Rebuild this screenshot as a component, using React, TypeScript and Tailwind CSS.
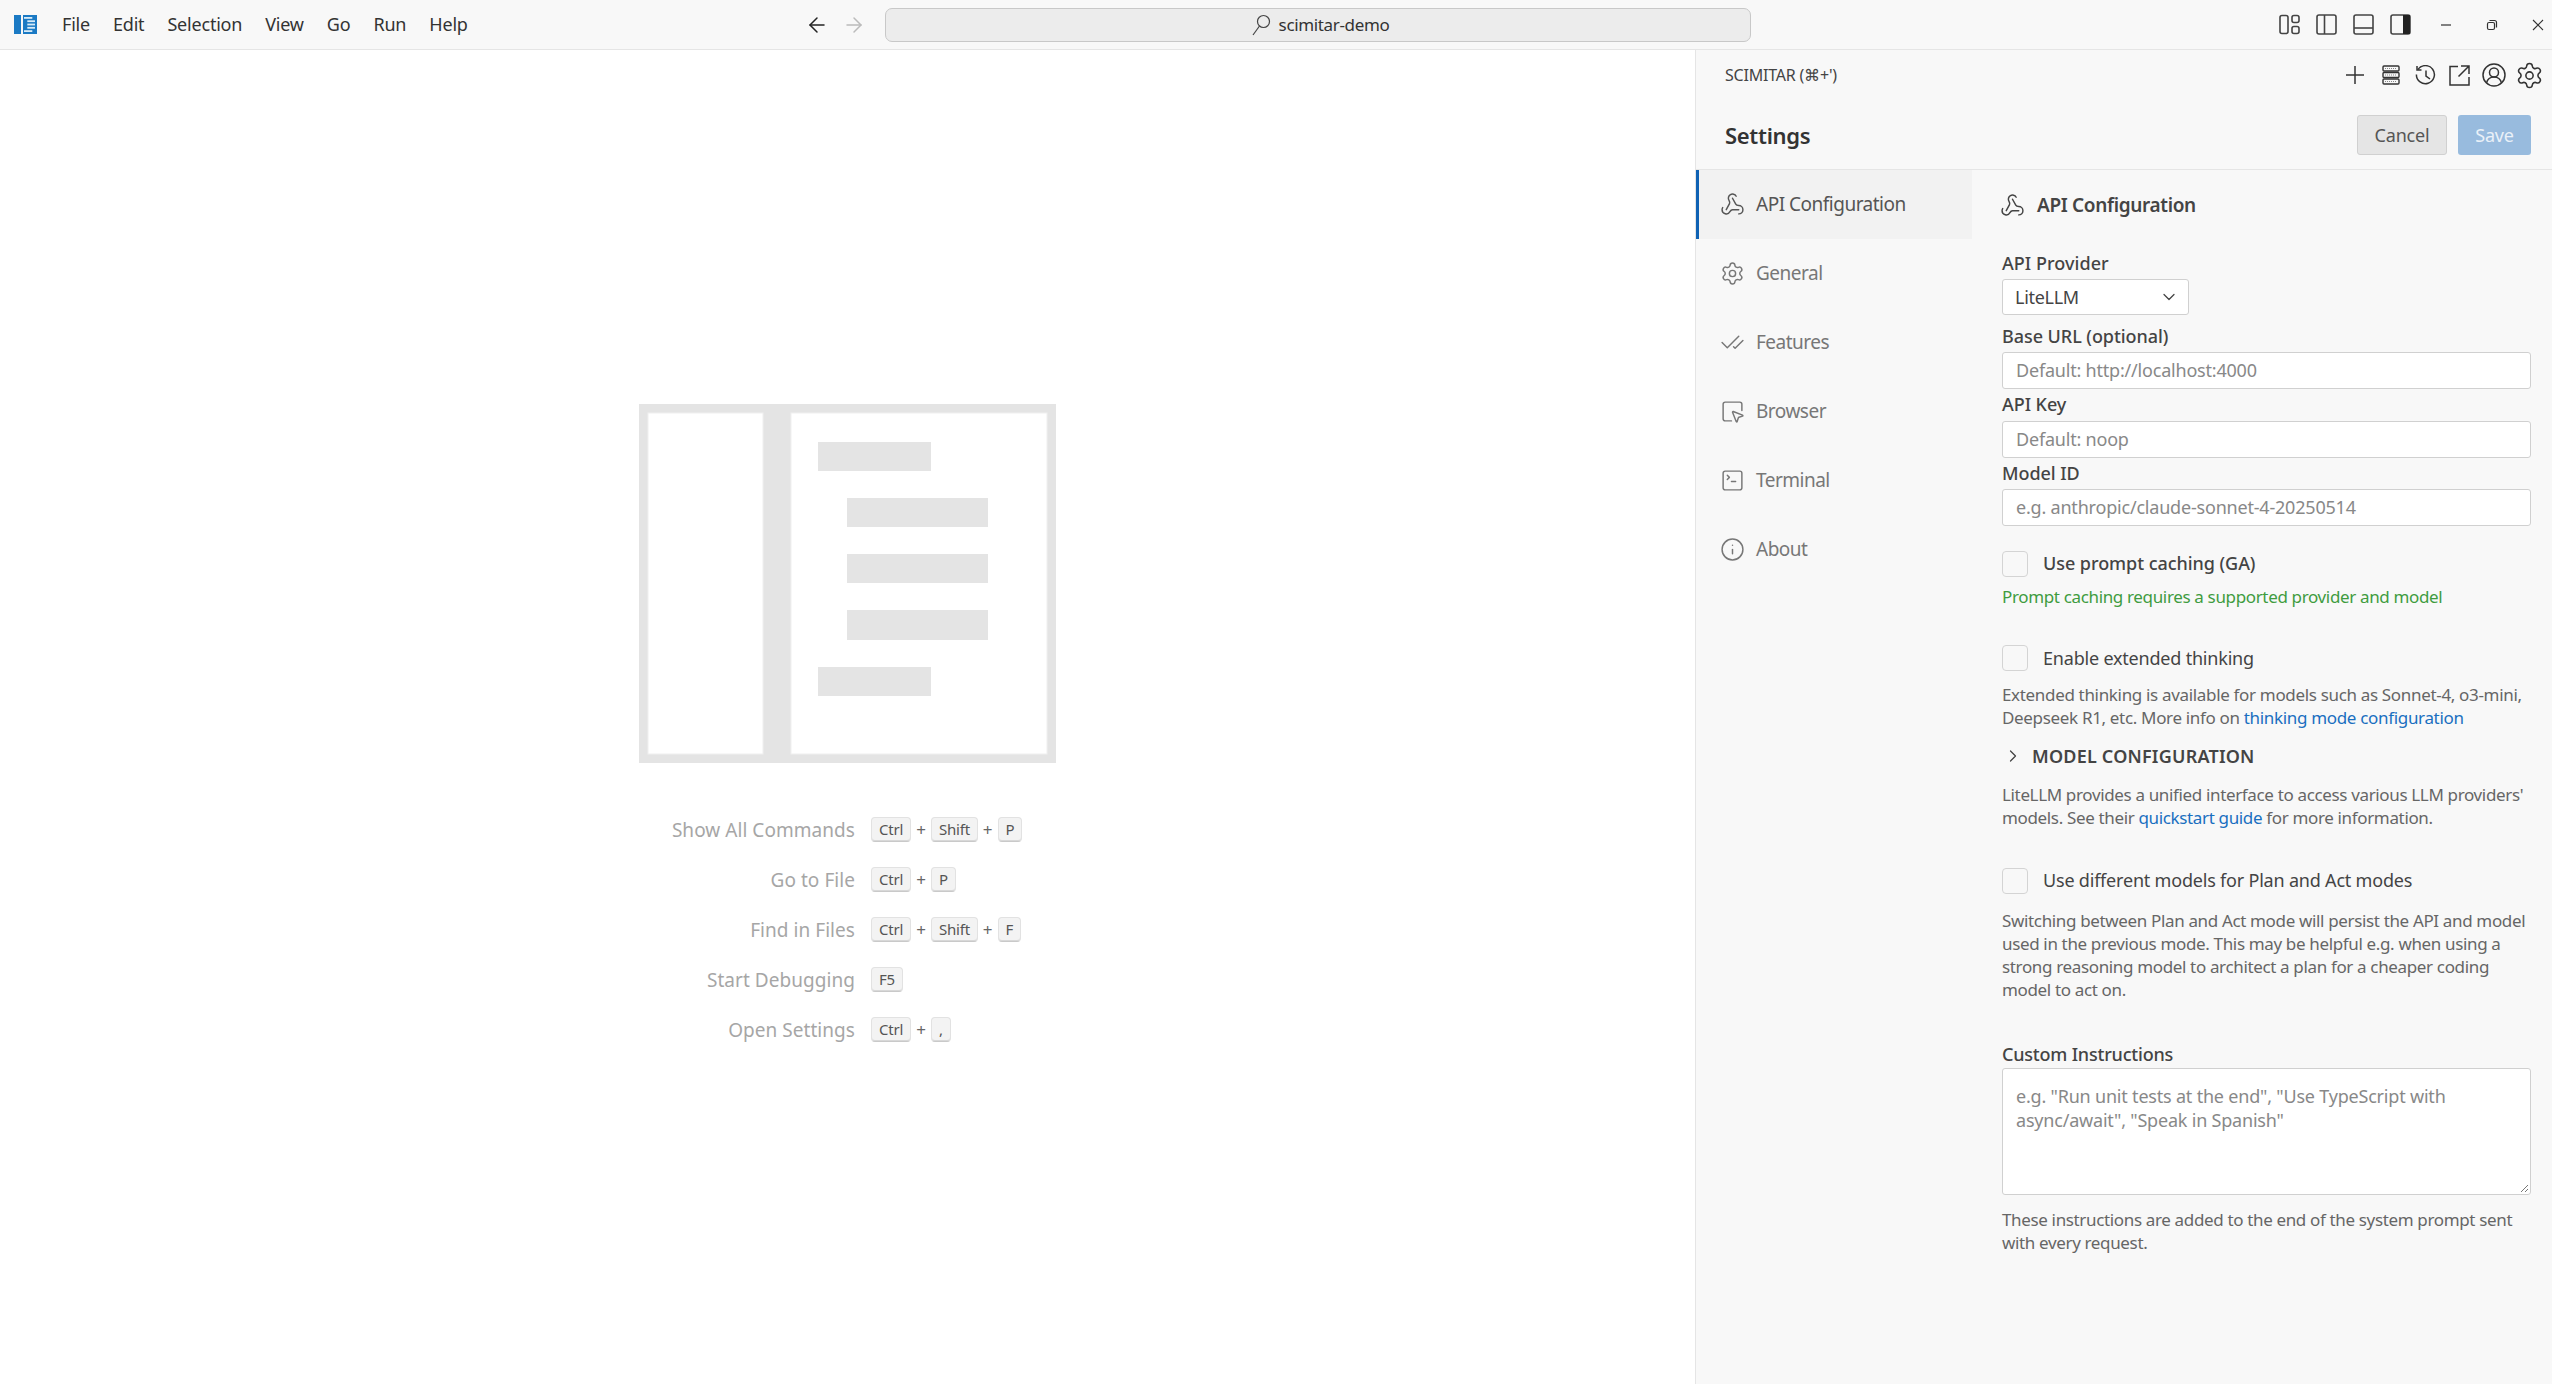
import { Webhook, Settings, CheckCheck, SquareMousePointer, SquareTerminal, Info, ChevronDown, ChevronRight, ArrowLeft, ArrowRight } from "lucide-react";

const font = "font-['Noto_Sans',sans-serif]";

function Logo() {
  return (
    <svg width="23" height="19" viewBox="0 0 23 19" className="shrink-0">
      <rect x="0" y="0" width="7" height="19" fill="#1b7ac4" />
      <rect x="9" y="0" width="14" height="19" fill="#1b7ac4" />
      <rect x="10" y="2" width="8.300" height="1.800" fill="#d7ebf8" />
      <rect x="13.300" y="5.300" width="7.700" height="1.800" fill="#d7ebf8" />
      <rect x="13.300" y="8.600" width="7.700" height="1.800" fill="#d7ebf8" />
      <rect x="13.300" y="11.900" width="7.700" height="1.800" fill="#d7ebf8" />
      <rect x="10" y="15.200" width="8.300" height="1.800" fill="#d7ebf8" />
    </svg>
  );
}

function LayoutIcon({ kind }: { kind: string }) {
  return (
    <svg width="21" height="21" viewBox="0 0 21 21" fill="none" stroke="#444" strokeWidth="1.6">
      {kind === "custom" && (
        <>
          <rect x="1" y="1.500" width="8" height="18" rx="2" />
          <rect x="13" y="1.500" width="7" height="7" rx="2" />
          <rect x="13" y="12.500" width="7" height="7" rx="2" />
        </>
      )}
      {kind !== "custom" && <rect x="1" y="1" width="19" height="19" rx="2" />}
      {kind === "left" && <path d="M8.500 1v19" />}
      {kind === "bottom" && <path d="M1 14h19" />}
      {kind === "right" && <rect x="13" y="1" width="7" height="19" fill="#222" stroke="none" />}
    </svg>
  );
}

function TitleBar() {
  const menus = ["File", "Edit", "Selection", "View", "Go", "Run", "Help"];
  return (
    <div className="h-[50px] shrink-0 flex items-center bg-[#f8f8f8] border-b border-[#e5e5e5] text-[#333]">
      <div className="w-[62px] pl-[14px] shrink-0"><Logo /></div>
      <div className="w-[743px] shrink-0 flex gap-[23px] text-[18px] tracking-[-0.2px] text-[#333]">
        {menus.map((m) => <span key={m}>{m}</span>)}
      </div>
      <ArrowLeft size={24} strokeWidth={1.5} className="text-[#222] shrink-0" />
      <ArrowRight size={24} strokeWidth={1.5} className="text-[#bbb] shrink-0 ml-[13px]" />
      <div className="ml-[19px] w-[866px] h-[34px] shrink-0 flex items-center justify-center gap-[8px] pl-[4px] rounded-[7px] border border-[#c8c8c8] bg-[#ececec] text-[17px] tracking-[-0.35px]">
        <svg width="20" height="22" viewBox="0 0 20 22" fill="none" stroke="#444" strokeWidth="1.200"><circle cx="12.500" cy="7.500" r="6" /><path d="M8.500 12L2 21" /></svg>
        scimitar-demo
      </div>
      <div className="ml-auto flex items-center pr-[8px]">
        <div className="flex gap-[16px]">
          <LayoutIcon kind="custom" />
          <LayoutIcon kind="left" />
          <LayoutIcon kind="bottom" />
          <LayoutIcon kind="right" />
        </div>
        <svg width="12" height="12" viewBox="0 0 12 12" className="ml-[29px]" stroke="#333" strokeWidth="1.200"><path d="M1 6h10" /></svg>
        <svg width="12" height="12" viewBox="0 0 12 12" fill="none" className="ml-[34px]" stroke="#333" strokeWidth="1.200"><rect x="1.500" y="3.500" width="7" height="7" rx="1.500" /><path d="M3.500 1.500h5a2 2 0 0 1 2 2v5" /></svg>
        <svg width="12" height="12" viewBox="0 0 12 12" className="ml-[34px]" stroke="#333" strokeWidth="1.100"><path d="M1 1l10 10M11 1L1 11" /></svg>
      </div>
    </div>
  );
}

function Letterpress() {
  return (
    <svg width="417" height="359" viewBox="0 0 417 359" className="shrink-0">
      <rect width="417" height="359" fill="#e4e4e4" />
      <rect x="9" y="9" width="115" height="341" fill="#fff" stroke="#efefef" />
      <rect x="152" y="9" width="256" height="341" fill="#fff" stroke="#efefef" />
      <rect x="179" y="38" width="113" height="29" fill="#e4e4e4" />
      <rect x="208" y="94" width="141" height="29" fill="#e4e4e4" />
      <rect x="208" y="150" width="141" height="29" fill="#e4e4e4" />
      <rect x="208" y="206" width="141" height="30" fill="#e4e4e4" />
      <rect x="179" y="263" width="113" height="29" fill="#e4e4e4" />
    </svg>
  );
}

function Key({ children }: { children: string }) {
  return (
    <kbd className={`${font} h-[25px] px-[7px] flex items-center justify-center rounded-[4px] border border-[#e2e2e2] border-b-[#c9c9c9] bg-[#f3f3f3] text-[15px] text-[#555] tracking-[-0.2px] shadow-[inset_0_-1px_0_#d8d8d8]`}>
      {children}
    </kbd>
  );
}

const shortcuts = [
  ["Show All Commands", ["Ctrl", "Shift", "P"]],
  ["Go to File", ["Ctrl", "P"]],
  ["Find in Files", ["Ctrl", "Shift", "F"]],
  ["Start Debugging", ["F5"]],
  ["Open Settings", ["Ctrl", ","]],
] as const;

function Watermark() {
  return (
    <div className="flex-1 flex flex-col items-center pt-[354px] bg-white">
      <Letterpress />
      <div className="mt-[42px] w-full">
        {shortcuts.map(([label, keys]) => (
          <div key={label} className="h-[50px] grid grid-cols-[855px_1fr] items-center">
            <div className="text-right text-[19px] text-[#a6a6a6] tracking-[0.05px]">{label}</div>
            <div className="pl-[16px] pb-[1px] flex items-center gap-[5px] text-[#555] text-[17px]">
              {keys.map((k, i) => (
                <span key={k} className="flex items-center gap-[5px]">
                  {i > 0 && <span className="text-[#666]">+</span>}
                  <Key>{k}</Key>
                </span>
              ))}
            </div>
          </div>
        ))}
      </div>
    </div>
  );
}

const tabs = [
  ["API Configuration", Webhook],
  ["General", Settings],
  ["Features", CheckCheck],
  ["Browser", SquareMousePointer],
  ["Terminal", SquareTerminal],
  ["About", Info],
] as const;

function SideTabs() {
  return (
    <div className="w-[276px] shrink-0">
      {tabs.map(([label, Icon], i) => (
        <div
          key={label}
          className={`h-[69px] flex items-center gap-[11px] pl-[21px] border-l-[3px] text-[19px] tracking-[-0.5px] ${
            i === 0 ? "border-[#0f62b4] bg-[#f2f2f2] text-[#555]" : "border-transparent text-[#777]"
          }`}
        >
          <Icon size={25} strokeWidth={1.4} className="shrink-0" />
          {label}
        </div>
      ))}
    </div>
  );
}

function Field({ label, placeholder, mt }: { label: string; placeholder: string; mt?: string }) {
  return (
    <>
      <div className={`${mt ?? ""} h-[31.5px] flex items-center text-[18px] font-medium text-[#444] tracking-[-0.05px]`}>{label}</div>
      <div className="h-[37px] flex items-center px-[13px] bg-white border border-[#d0d0d0] rounded-[3px] text-[18px] text-[#888] tracking-[-0.2px]">{placeholder}</div>
    </>
  );
}

function Check({ label, bold }: { label: string; bold?: boolean }) {
  return (
    <div className={`flex items-center gap-[15px] text-[18px] text-[#444] ${bold ? "font-medium tracking-[-0.05px]" : "tracking-[-0.2px]"}`}>
      <span className="w-[26px] h-[26px] bg-[#f8f8f8] border border-[#d4d4d4] rounded-[4px] shrink-0" />
      {label}
    </div>
  );
}

function ApiForm() {
  return (
    <div className="flex-1 pl-[30px] pr-[21px]">
      <div className="h-[70px] flex items-center gap-[12px] -ml-[2px] text-[19px] font-semibold text-[#444] tracking-[-0.35px]">
        <Webhook size={25} strokeWidth={1.4} className="shrink-0" />
        API Configuration
      </div>
      <div className="mt-[8px] h-[31px] flex items-center text-[18px] font-medium text-[#444] tracking-[0.05px]">API Provider</div>
      <div className="w-[187px] h-[36px] flex items-center justify-between pl-[12px] pr-[9px] bg-white border border-[#d0d0d0] rounded-[3px] text-[18px] text-[#444] tracking-[-0.3px]">
        LiteLLM
        <ChevronDown size={20} strokeWidth={1.5} />
      </div>
      <Field mt="mt-[5.5px]" label="Base URL (optional)" placeholder="Default: http://localhost:4000" />
      <Field label="API Key" placeholder="Default: noop" />
      <Field label="Model ID" placeholder="e.g. anthropic/claude-sonnet-4-20250514" />

      <div className="mt-[24px]"><Check bold label="Use prompt caching (GA)" /></div>
      <p className="mt-[8px] text-[17px] leading-[23px] text-[#3f9c3f] tracking-[-0.35px]">Prompt caching requires a supported provider and model</p>
      <div className="mt-[36.5px]"><Check label="Enable extended thinking" /></div>
      <p className="mt-[11px] text-[17px] leading-[23px] text-[#666] tracking-[-0.33px]">
        Extended thinking is available for models such as Sonnet-4, o3-mini,<br />
        Deepseek R1, etc. More info on <span className="text-[#1a6fc0]">thinking mode configuration</span>
      </p>
      <div className="mt-[15.5px] flex items-center gap-[9px] pl-[1px] h-[24px] text-[18px] font-semibold text-[#444] tracking-[0.2px]">
        <ChevronRight size={20} strokeWidth={1.5} className="shrink-0" />
        MODEL CONFIGURATION
      </div>
      <p className="mt-[14.5px] text-[17px] leading-[23px] text-[#666] tracking-[-0.35px]">
        LiteLLM provides a unified interface to access various LLM providers'<br />
        models. See their <span className="text-[#1a6fc0]">quickstart guide</span> for more information.
      </p>
      <div className="mt-[38.5px]"><Check label="Use different models for Plan and Act modes" /></div>
      <p className="mt-[14.5px] text-[17px] leading-[23px] text-[#666] tracking-[-0.35px]">
        Switching between Plan and Act mode will persist the API and model<br />
        used in the previous mode. This may be helpful e.g. when using a<br />
        strong reasoning model to architect a plan for a cheaper coding<br />
        model to act on.
      </p>
      <div className="mt-[39.5px] h-[28px] flex items-center text-[18px] font-medium text-[#444] tracking-[-0.2px]">Custom Instructions</div>
      <div className="relative h-[127px] px-[13px] py-[15px] bg-white border border-[#d0d0d0] rounded-[3px] text-[18px] leading-[24px] text-[#888] tracking-[-0.2px]">
        e.g. "Run unit tests at the end", "Use TypeScript with<br />
        async/await", "Speak in Spanish"
        <svg width="9" height="9" viewBox="0 0 9 9" stroke="#777" className="absolute right-[1px] bottom-[1px]"><path d="M1 8l7-7M5 8l3-3" /></svg>
      </div>
      <p className="mt-[12.5px] text-[17px] leading-[23px] text-[#666] tracking-[-0.35px]">
        These instructions are added to the end of the system prompt sent<br />
        with every request.
      </p>
    </div>
  );
}

function PanelIcons() {
  return (
    <div className="flex items-center">
      <svg width="20" height="20" viewBox="0 0 20 20" stroke="#333" strokeWidth="1.500"><path d="M10 1v18M1 10h18" /></svg>
      <svg width="18" height="20" viewBox="0 0 18 20" fill="none" stroke="#333" strokeWidth="1.400" className="ml-[17px]">
        <rect x="1" y="1" width="16" height="5" rx="1" />
        <rect x="1" y="7.500" width="16" height="5" rx="1" />
        <rect x="1" y="14" width="16" height="5" rx="1" />
        <path d="M3 3.500h12M3 10h12M3 16.500h12" stroke="#888" strokeWidth="1" strokeDasharray="1 1" />
      </svg>
      <svg width="21" height="21" viewBox="0 0 21 21" fill="none" stroke="#333" strokeWidth="1.500" className="ml-[15px]"><path d="M3 4.500a9 9 0 1 1-1.600 5" /><path d="M2 1v4h4.500M11 5.500V11l4 3" /></svg>
      <svg width="21" height="21" viewBox="0 0 21 21" fill="none" stroke="#333" strokeWidth="1.500" className="ml-[13px]"><path d="M9 1.500H1v18.500h19v-8M12 1h8v8M20 1L9.500 11.500" /></svg>
      <svg width="24" height="24" viewBox="0 0 24 24" fill="none" stroke="#333" strokeWidth="1.500" className="ml-[12px]"><circle cx="12" cy="12" r="11" /><circle cx="12" cy="9.500" r="4.500" /><path d="M4.500 20c1-4 4-6 7.500-6s6.500 2 7.500 6" /></svg>
      <Settings size={29} strokeWidth={1.3} className="text-[#333] ml-[8.5px]" />
    </div>
  );
}

function Panel() {
  return (
    <div className="w-[857px] shrink-0 flex flex-col border-l border-[#e5e5e5] bg-[#f8f8f8]">
      <div className="h-[50px] shrink-0 flex items-center justify-between pl-[29px] pr-[8.5px]">
        <span className="text-[16px] text-[#444] tracking-[-0.2px]">SCIMITAR (⌘+')</span>
        <PanelIcons />
      </div>
      <div className="h-[70px] shrink-0 flex items-start justify-between pl-[29px] pr-[21px] pt-[15px] border-b border-[#e5e5e5]">
        <span className="h-[40px] flex items-center text-[22px] font-semibold text-[#333] tracking-[-0.3px]">Settings</span>
        <div className="flex gap-[11px] text-[18px] tracking-[-0.2px]">
          <span className="w-[90px] h-[40px] flex items-center justify-center rounded-[3px] border border-[#d0d0d0] bg-[#e5e5e5] text-[#555]">Cancel</span>
          <span className="w-[73px] h-[40px] flex items-center justify-center rounded-[3px] bg-[#98bbde] text-[#eaf1f8]">Save</span>
        </div>
      </div>
      <div className="flex-1 flex">
        <SideTabs />
        <ApiForm />
      </div>
    </div>
  );
}

export default function App() {
  return (
    <div className={`${font} w-[2552px] h-[1384px] flex flex-col overflow-hidden bg-white`}>
      <TitleBar />
      <div className="flex-1 flex">
        <Watermark />
        <Panel />
      </div>
    </div>
  );
}
